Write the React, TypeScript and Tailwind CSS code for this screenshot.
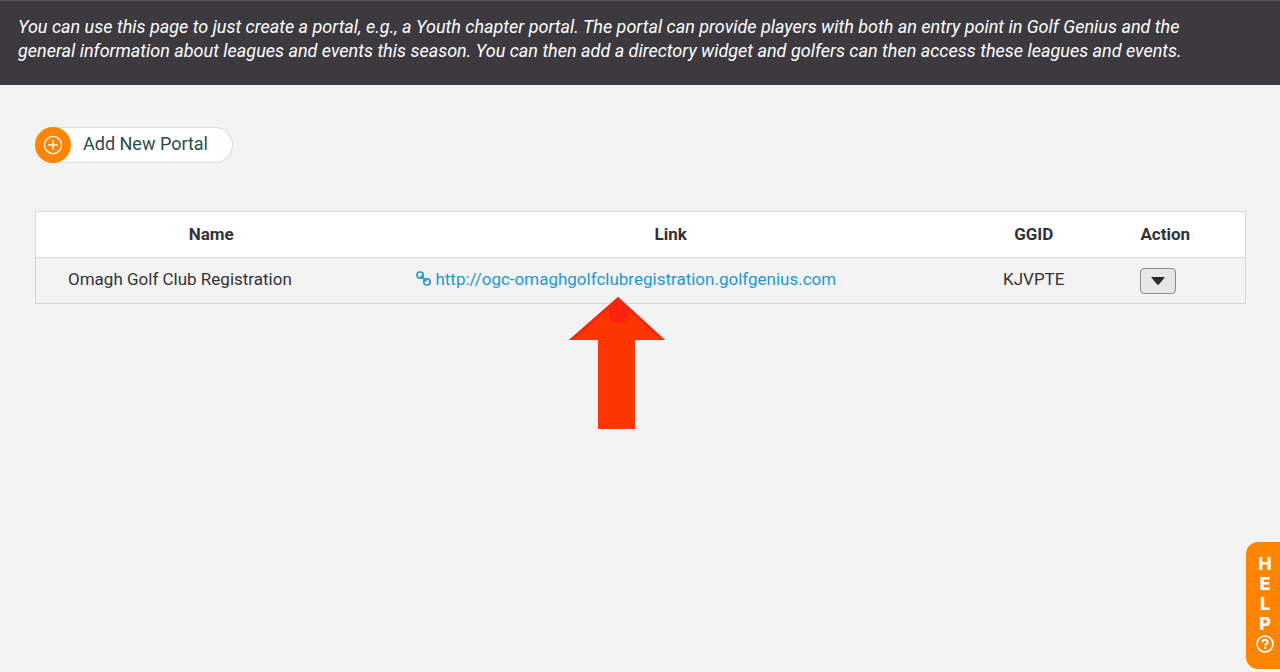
const PORTALS = [
  {
    name: "Omagh Golf Club Registration",
    url: "http://ogc-omaghgolfclubregistration.golfgenius.com",
    ggid: "KJVPTE",
  },
];

function PlusIcon() {
  return (
    <svg viewBox="0 0 20 20" className="h-5 w-5" fill="none" stroke="white" strokeWidth="1.3">
      <circle cx="10" cy="10" r="8.6" />
      <path d="M10 5.2v9.6M5.2 10h9.6" />
    </svg>
  );
}

function ChainIcon() {
  return (
    <svg viewBox="0 0 15 15" className="h-[15px] w-[15px] shrink-0" fill="none" stroke="currentColor" strokeWidth="1.7">
      <rect x="1" y="1" width="6.2" height="6.2" rx="2.7" />
      <rect x="7.8" y="7.8" width="6.2" height="6.2" rx="2.7" />
      <path d="M4.6 4.6l5.8 5.8" />
    </svg>
  );
}

function Arrow() {
  return (
    <svg
      viewBox="0 0 96 132"
      className="pointer-events-none absolute top-[39px] left-[183px] h-33 w-24"
      aria-hidden="true"
    >
      <path d="M49 0L96 43H66v89H29V43H0z" fill="#fc3600" />
      <path d="M49 0L96 43L92 42L49 4L4 43H0z" fill="#ff230f" />
      <circle cx="50" cy="16" r="10.5" fill="#ff230f" />
    </svg>
  );
}

function HelpTab() {
  return (
    <button
      aria-label="Help"
      className="fixed right-0 bottom-[3px] flex w-[34px] flex-col items-center rounded-l-xl bg-[#ff8400] pt-3 pb-4 pl-1 font-['Inter',sans-serif] text-lg leading-5 font-extrabold text-white"
    >
      <span>H</span>
      <span>E</span>
      <span>L</span>
      <span>P</span>
      <svg viewBox="0 0 18 18" className="mt-px h-[18px] w-[18px]" fill="none" stroke="white">
        <circle cx="9" cy="9" r="8" strokeWidth="1.6" />
        <path d="M6.4 7.3c0-3.4 5.3-3.3 5.3-.3 0 1.9-2.5 1.9-2.5 3.8" strokeWidth="2" />
        <path d="M8.1 12.9h2.1" strokeWidth="2" />
      </svg>
    </button>
  );
}

export default function App() {
  return (
    <div className="min-h-screen bg-[#f3f3f3] font-['Roboto',sans-serif] text-[17px] leading-6 text-[#333237]">
      <header className="border-t border-[#57565b] bg-[#3c3a3f] px-[18px] pt-[14px] pb-[22px] text-lg leading-6 text-white italic">
        You can use this page to just create a portal, e.g., a Youth chapter portal. The portal can
        provide players with both an entry point in Golf Genius and the
        <br />
        general information about leagues and events this season. You can then add a directory
        widget and golfers can then access these leagues and events.
      </header>

      <main className="pt-[42px] pr-[34px] pl-[35px]">
        <button className="flex items-center rounded-full border border-l-0 border-[#dcdcdc] bg-white pr-6 text-lg leading-6 text-[#2d4a4a]">
          <span className="-my-px flex h-9 w-9 items-center justify-center rounded-full bg-[#ff8400]">
            <PlusIcon />
          </span>
          <span className="pb-0.5 pl-3">Add New Portal</span>
        </button>

        <table className="mt-12 w-full table-fixed border border-[#d8d8d8] text-left">
          <thead>
            <tr className="h-[46px] border-b border-[#d8d8d8] bg-white">
              <th className="w-[29%] pb-0.5 text-center">Name</th>
              <th className="w-[47%] pb-0.5 text-center">Link</th>
              <th className="w-[13%] pb-0.5 text-center">GGID</th>
              <th className="px-7 pb-0.5">Action</th>
            </tr>
          </thead>
          <tbody>
            {PORTALS.map((portal) => (
              <tr key={portal.ggid} className="h-[46px]">
                <td className="px-8 pb-1">{portal.name}</td>
                <td className="relative px-[30px] pb-1">
                  <a href={portal.url} className="flex items-center gap-1 text-[#2199cf]">
                    <ChainIcon />
                    {portal.url}
                  </a>
                  <Arrow />
                </td>
                <td className="pb-1 text-center">{portal.ggid}</td>
                <td className="px-7">
                  <button
                    aria-label="Actions"
                    className="flex h-[26px] w-9 items-center justify-center rounded border border-[#8c8c8c] bg-[#e6e6e6]"
                  >
                    <svg viewBox="0 0 14 8" className="h-2 w-3.5" fill="#2b2a2e">
                      <path d="M.8 0h12.4q.8 0 .3.7L7.8 7.4q-.8.8-1.6 0L.5.7Q0 0 .8 0z" />
                    </svg>
                  </button>
                </td>
              </tr>
            ))}
          </tbody>
        </table>
      </main>

      <HelpTab />
    </div>
  );
}
